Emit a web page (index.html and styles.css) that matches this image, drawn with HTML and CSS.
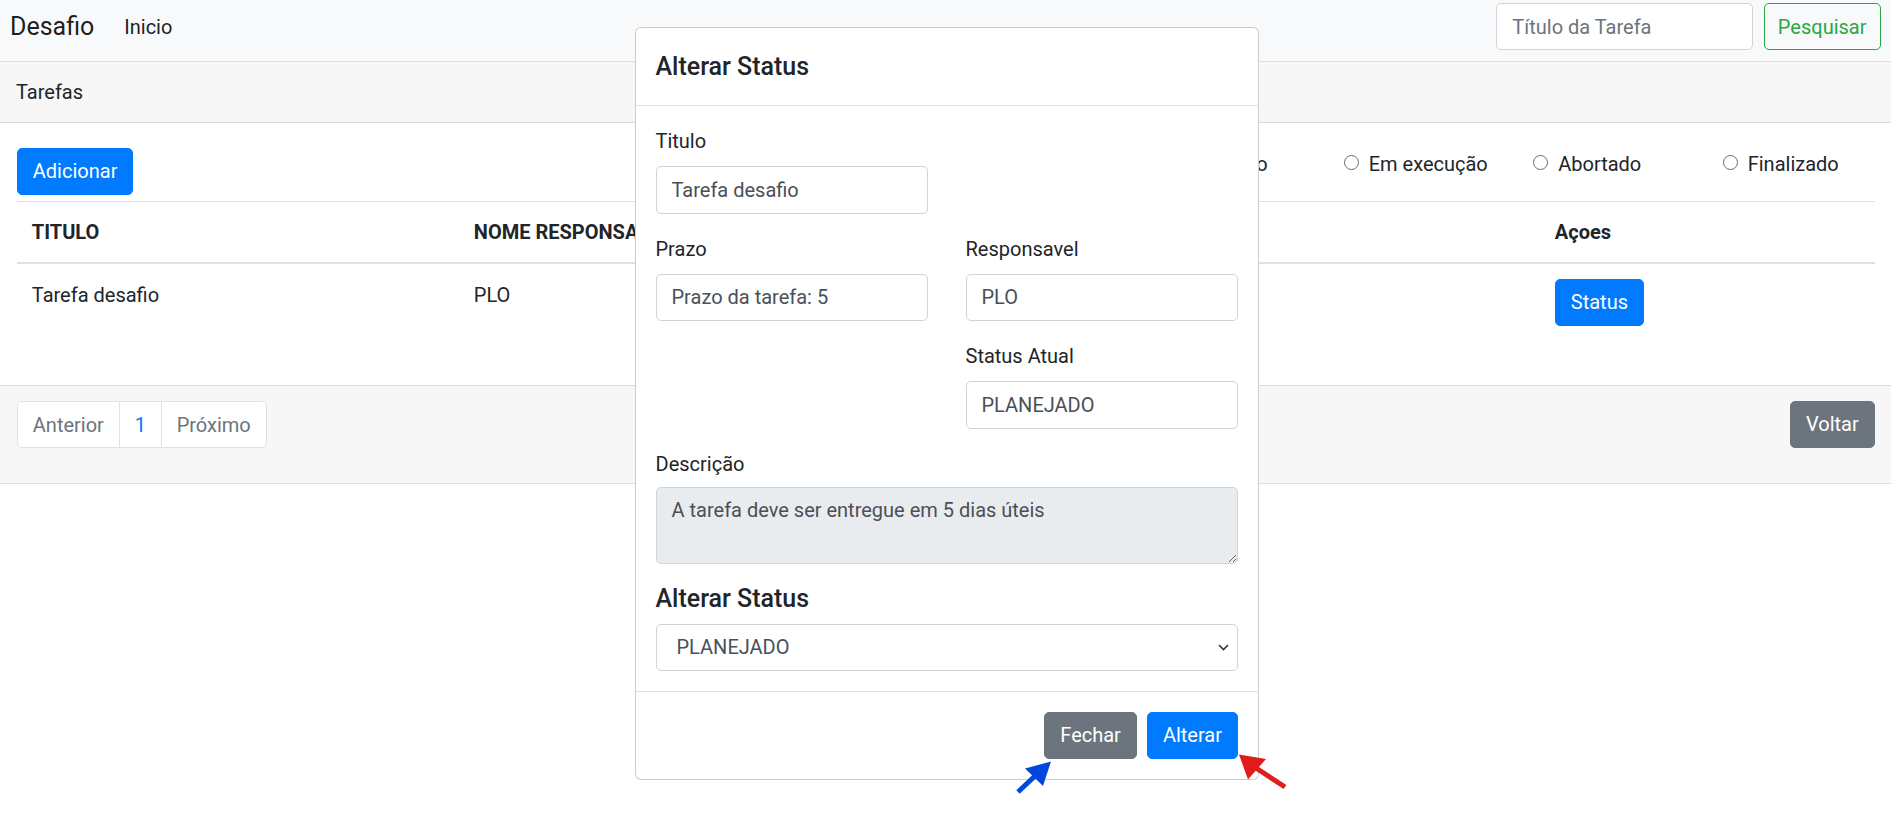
FILE: index.html
```html
<!DOCTYPE html>
<html lang="pt-BR">
<head>
<meta charset="utf-8">
<title>Desafio</title>
<link rel="stylesheet" href="styles.css">
</head>
<body>
<nav class="navbar">
  <a class="brand">Desafio</a>
  <a class="nav-link">Inicio</a>
  <form class="search">
    <input class="form-control search-input" type="text" placeholder="Título da Tarefa">
    <button type="button" class="btn btn-outline-success">Pesquisar</button>
  </form>
</nav>

<div class="card">
  <div class="card-header">Tarefas</div>
  <div class="card-body">
    <div class="toolbar">
      <button type="button" class="btn btn-primary">Adicionar</button>
      <label class="radio"><input type="radio" name="st" class="radio-input"><span>Planejado</span></label>
      <label class="radio"><input type="radio" name="st" class="radio-input"><span>Em execução</span></label>
      <label class="radio"><input type="radio" name="st" class="radio-input"><span>Abortado</span></label>
      <label class="radio"><input type="radio" name="st" class="radio-input"><span>Finalizado</span></label>
    </div>
    <table class="table">
      <colgroup>
        <col class="c1"><col class="c2"><col class="c3"><col class="c4"><col class="c5">
      </colgroup>
      <thead>
        <tr><th>TITULO</th><th>NOME RESPONSAVEL</th><th>PRAZO</th><th>STATUS</th><th>Açoes</th></tr>
      </thead>
      <tbody>
        <tr><td>Tarefa desafio</td><td>PLO</td><td>5</td><td>PLANEJADO</td><td><button type="button" class="btn btn-primary">Status</button></td></tr>
      </tbody>
    </table>
  </div>
  <div class="card-footer">
    <ul class="pagination">
      <li class="page-item disabled"><a class="page-link">Anterior</a></li>
      <li class="page-item"><a class="page-link link-blue">1</a></li>
      <li class="page-item disabled"><a class="page-link">Próximo</a></li>
    </ul>
    <button type="button" class="btn btn-secondary">Voltar</button>
  </div>
</div>

<div class="modal">
  <div class="modal-header"><h5 class="modal-title">Alterar Status</h5></div>
  <div class="modal-body">
    <div class="form-row">
      <div class="form-group"><label>Titulo</label><input class="form-control" type="text" value="Tarefa desafio" readonly></div>
    </div>
    <div class="form-row">
      <div class="form-group"><label>Prazo</label><input class="form-control" type="text" value="Prazo da tarefa: 5" readonly></div>
      <div class="form-group"><label>Responsavel</label><input class="form-control" type="text" value="PLO" readonly></div>
      <div class="form-group second"><label>Status Atual</label><input class="form-control" type="text" value="PLANEJADO" readonly></div>
    </div>
    <div class="form-group"><label>Descrição</label><textarea class="form-control textarea" readonly>A tarefa deve ser entregue em 5 dias úteis</textarea></div>
    <h5 class="section-title">Alterar Status</h5>
    <div class="select-wrap">
      <select class="form-control select"><option>PLANEJADO</option></select>
      <svg class="chevron" width="11" height="7" viewBox="0 0 11 7"><path d="M1 1l4.5 4.5L10 1" fill="none" stroke="#333" stroke-width="1.6"/></svg>
    </div>
  </div>
  <div class="modal-footer">
    <button type="button" class="btn btn-secondary">Fechar</button>
    <button type="button" class="btn btn-primary">Alterar</button>
  </div>
</div>

<svg class="arrows" width="1891" height="820" viewBox="0 0 1891 820">
  <line x1="1018" y1="792" x2="1036" y2="775" stroke="#0047e0" stroke-width="5"/>
  <polygon points="1051,761.5 1025,768.5 1043,786" fill="#0047e0"/>
  <line x1="1285" y1="787" x2="1256" y2="768" stroke="#e21c1c" stroke-width="5"/>
  <polygon points="1239,754.5 1266,759 1248,779.5" fill="#e21c1c"/>
</svg>
</body>
</html>
```

FILE: styles.css
```css
* { box-sizing: border-box; }

html, body {
  margin: 0;
  padding: 0;
}

body {
  font-family: "Segoe UI", Roboto, "Noto Sans", "Liberation Sans", sans-serif;
  font-size: 20px;
  line-height: 1.5;
  color: #212529;
  background: #fff;
  overflow: hidden;
  position: relative;
  width: 1891px;
  height: 820px;
}

/* ---------- generic controls ---------- */
.btn {
  font-family: inherit;
  font-size: 20px;
  line-height: 30px;
  padding: 7.5px 15px;
  border: 1.25px solid transparent;
  border-radius: 5px;
  cursor: pointer;
  white-space: nowrap;
}

.btn-primary { background: #007bff; border-color: #007bff; color: #fff; }
.btn-secondary { background: #6c757d; border-color: #6c757d; color: #fff; }
.btn-outline-success { background: transparent; border-color: #28a745; color: #28a745; height: 46.5px; padding: 0 13px; }

.form-control {
  display: block;
  width: 100%;
  height: 47.5px;
  padding: 7.5px 15px;
  font-family: inherit;
  font-size: 20px;
  line-height: 30px;
  color: #495057;
  background: #fff;
  border: 1.25px solid #ced4da;
  border-radius: 5px;
  outline: none;
}

.form-control::placeholder { color: #6c757d; opacity: 1; }

/* ---------- navbar ---------- */
.navbar {
  display: flex;
  align-items: center;
  height: 61px;
  padding: 3px 10.5px 11px 10px;
  background: #f8f9fa;
}

.brand {
  font-size: 25px;
  line-height: 37.5px;
  color: rgba(0, 0, 0, .9);
  margin-right: 20px;
}

.nav-link {
  padding: 0 10px;
  color: rgba(0, 0, 0, .9);
}

.search {
  margin: 0 0 0 auto;
  display: flex;
  align-items: center;
  gap: 10.5px;
}

.search .search-input {
  width: 257px;
  height: 46.5px;
  flex: none;
}

/* ---------- card ---------- */
.card {
  border-top: 1.25px solid rgba(0, 0, 0, .125);
  border-bottom: 1.25px solid rgba(0, 0, 0, .125);
}

.card-header {
  padding: 15px 16px;
  line-height: 30px;
  background: rgba(0, 0, 0, .03);
  border-bottom: 1.25px solid rgba(0, 0, 0, .125);
}

.card-body {
  padding: 24.5px 16.3px 25px 16.8px;
}

.toolbar {
  display: grid;
  grid-template-columns: 1fr 189.5px 189.5px 189.5px 152px;
  align-items: start;
  height: 53px;
}

.toolbar .btn { justify-self: start; }

.radio {
  display: flex;
  align-items: flex-start;
  line-height: 30px;
  white-space: nowrap;
  padding-top: 1px;
}

.radio-input {
  appearance: none;
  -webkit-appearance: none;
  flex: none;
  width: 15px;
  height: 15px;
  margin: 6px 10px 0 0;
  border: 1.25px solid #6a6a6a;
  border-radius: 50%;
  background: #fff;
}

.table {
  width: 100%;
  border-collapse: collapse;
  table-layout: fixed;
  margin-bottom: 20px;
}

.c1 { width: 442px; }
.c2 { width: 300px; }
.c3 { width: 300px; }
.c4 { width: 481px; }
.c5 { width: 335px; }

.table th,
.table td {
  padding: 15px;
  text-align: left;
  vertical-align: top;
  border-top: 1.25px solid #dee2e6;
  line-height: 30px;
}

.table th { font-weight: 700; white-space: nowrap; }
.table thead th { border-bottom: 2.5px solid #dee2e6; }
.table td { padding-top: 16px; padding-bottom: 14px; }
.table td .btn { display: block; margin-top: -1px; }

.card-footer {
  display: flex;
  justify-content: space-between;
  align-items: flex-start;
  padding: 15px 16.3px 15px 16.8px;
  background: rgba(0, 0, 0, .03);
  border-top: 1.25px solid rgba(0, 0, 0, .125);
}

.pagination {
  display: flex;
  list-style: none;
  padding: 0;
  margin: 0 0 20px;
}

.page-link {
  display: block;
  padding: 11px 15px 9px;
  line-height: 25px;
  color: #6c757d;
  background: #fff;
  border: 1.25px solid #dee2e6;
  margin-left: -1.25px;
}

.page-item:first-child .page-link { margin-left: 0; border-radius: 5px 0 0 5px; }
.page-item:last-child .page-link { border-radius: 0 5px 5px 0; }
.link-blue { color: #007bff; }

/* ---------- modal ---------- */
.modal {
  position: absolute;
  top: 26.5px;
  left: 634.5px;
  width: 624.5px;
  background: #fff;
  border: 1.25px solid rgba(0, 0, 0, .2);
  border-radius: 6px;
}

.modal-header {
  padding: 20px;
  border-bottom: 1.25px solid #dee2e6;
}

.modal-title,
.section-title {
  margin: 0;
  font-size: 25px;
  font-weight: 500;
}

.modal-title { line-height: 37.5px; }

.modal-body { padding: 20px 20px 20px 20px; }

.form-row {
  display: grid;
  grid-template-columns: 1fr 1fr;
  column-gap: 37.5px;
}

.form-group { margin-bottom: 20px; }
.form-group.second { grid-column: 2; }

.form-group label {
  display: inline-block;
  margin-bottom: 10px;
  line-height: 30px;
}

.textarea {
  height: 77px;
  margin-top: -2px;
  background: #e9ecef;
  resize: vertical;
}

.section-title {
  line-height: 30px;
  margin-bottom: 10px;
}

.select-wrap { position: relative; }

.select {
  appearance: none;
  -webkit-appearance: none;
  height: 47px;
  padding: 0 40px 0 20px;
}

.chevron {
  position: absolute;
  right: 9px;
  top: 20px;
}

.modal-footer {
  display: flex;
  justify-content: flex-end;
  align-items: center;
  padding: 15px;
  border-top: 1.25px solid #dee2e6;
}

.modal-footer .btn { margin: 5px; }

.arrows {
  position: absolute;
  left: 0;
  top: 0;
  pointer-events: none;
}
```
